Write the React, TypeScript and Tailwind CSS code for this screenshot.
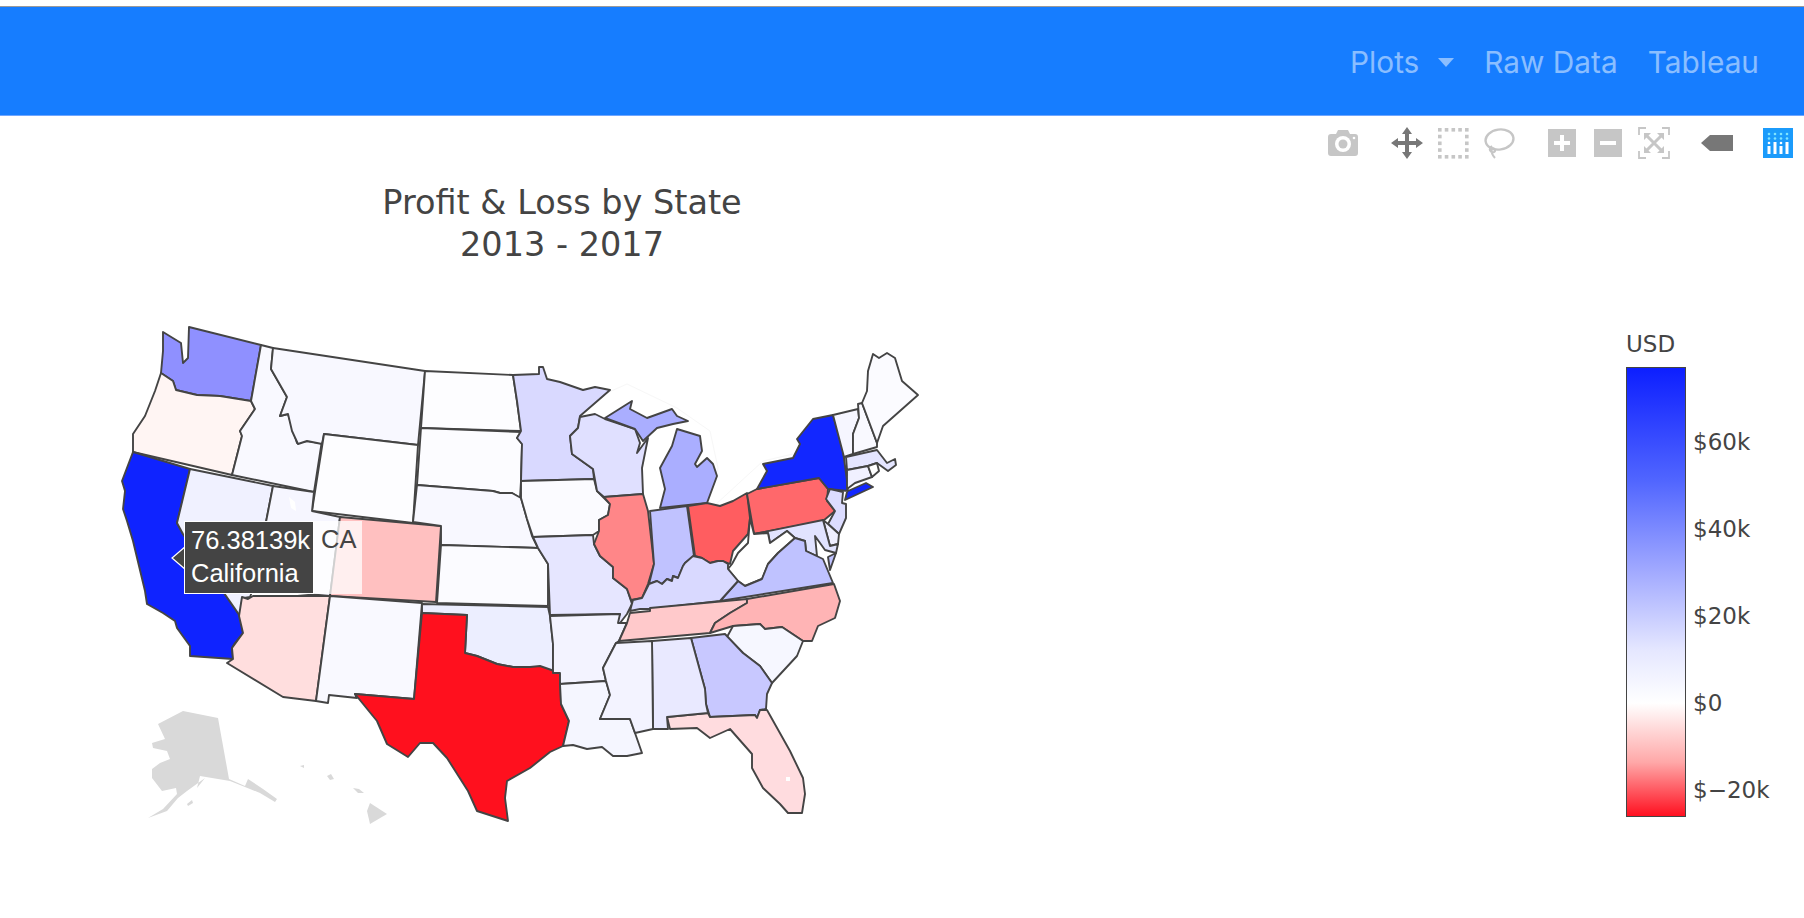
import React from "react";

type State = { id: string; fill: string; d: string };

const states: State[] = [
  { id: "WA", fill: "#8f90ff", d: "M163 331L181 342L183 362L188 357L189 326L261 344L251 400L220 395L197 394L176 389L173 380L161 372L163 350Z" },
  { id: "OR", fill: "#fff5f3", d: "M161 372L173 380L176 389L197 394L220 395L251 400L255 408L240 430L242 435L232 474L133 451L133 433L145 415L155 390Z" },
  { id: "CA", fill: "#0f23ff", d: "M133 451L190 468L177 522L183 533L240 615L243 632L235 642L232 647L233 658L190 655L190 645L177 627L175 620L163 612L147 603L145 590L133 540L127 520L123 508L125 490L122 480Z" },
  { id: "NV", fill: "#f0f1ff", d: "M190 468L273 485L253 588L250 596L244 597L242 600L240 615L183 533L177 522Z" },
  { id: "ID", fill: "#f9f9ff", d: "M261 344L273 347L271 368L287 396L280 415L288 413L297 442L307 440L320 442L323 433L314 491L232 474L242 435L240 430L255 408L251 400Z" },
  { id: "MT", fill: "#f8f8ff", d: "M273 347L425 370L418 444L324 433L322 443L307 440L298 443L292 430L288 413L280 415L287 396L271 368Z" },
  { id: "ND", fill: "#fdfdff", d: "M425 370L513 374L517 400L521 430L421 427Z" },
  { id: "SD", fill: "#fcfcff", d: "M421 427L521 431L517 437L522 443L521 480L520 497L512 492L500 492L493 490L417 484Z" },
  { id: "WY", fill: "#fdfdff", d: "M324 433L418 444L413 522L312 510Z" },
  { id: "UT", fill: "#f6f6ff", d: "M273 485L314 491L312 510L340 516L330 595L253 588Z" },
  { id: "CO", fill: "#ffc0c0", d: "M340 516L441 525L436 601L330 595Z" },
  { id: "AZ", fill: "#ffdede", d: "M242 596L248 598L253 595L330 595L316 700L283 696L227 662L233 658L232 647L243 632L239 615Z" },
  { id: "NM", fill: "#f9f9ff", d: "M330 595L422 602L414 698L355 693L357 697L329 694L328 702L316 700Z" },
  { id: "NE", fill: "#f8f8ff", d: "M417 484L493 490L500 492L512 492L521 497L527 518L532 535L538 547L441 544L441 525L413 521Z" },
  { id: "KS", fill: "#fbfbff", d: "M441 544L538 547L543 555L548 563L548 605L437 602Z" },
  { id: "OK", fill: "#eceeff", d: "M422 603L548 606L550 615L553 643L553 672L530 666L513 666L497 663L477 655L465 652L467 614L422 612Z" },
  { id: "TX", fill: "#ff101e", d: "M422 612L467 614L465 652L477 655L497 663L513 666L530 666L540 665L560 672L561 703L569 720L563 745L550 751L530 767L507 780L505 797L508 820L477 810L468 790L447 757L433 742L420 742L408 756L387 743L377 720L355 693L414 698Z" },
  { id: "MN", fill: "#d9d9ff", d: "M513 374L539 373L539 366L543 366L547 378L560 381L583 389L595 386L610 389L580 415L578 427L570 435L572 453L593 468L594 478L521 480L522 443L517 437L521 430L517 400Z" },
  { id: "IA", fill: "#fbfbff", d: "M521 480L594 478L597 490L610 503L608 514L599 519L599 530L593 534L533 536L527 518L521 497Z" },
  { id: "MO", fill: "#e6e6ff", d: "M533 536L593 534L594 543L600 555L613 566L613 577L627 588L632 603L627 613L620 622L615 622L620 613L550 614L548 563L543 555L538 547Z" },
  { id: "AR", fill: "#f3f3ff", d: "M550 615L620 613L618 622L627 622L619 640L616 642L603 667L606 680L560 683L560 672L553 672L553 643Z" },
  { id: "LA", fill: "#f5f6ff", d: "M560 683L606 680L610 694L600 718L630 718L635 732L642 752L627 755L613 755L602 746L587 748L573 744L563 745L569 720L561 703Z" },
  { id: "WI", fill: "#e0e0ff", d: "M580 416L595 413L605 418L635 428L640 442L637 452L648 437L642 467L643 493L604 496L597 490L593 468L572 453L570 435L578 427Z" },
  { id: "MIU", fill: "#aaaeff", d: "M605 417L632 400L630 408L647 417L672 408L677 415L688 420L673 423L657 427L643 440L635 428Z" },
  { id: "MIL", fill: "#aaaeff", d: "M677 428L700 435L702 450L695 463L697 466L707 457L713 463L717 475L707 502L660 507L665 488L660 467L672 445Z" },
  { id: "IL", fill: "#ff8688", d: "M604 496L643 493L648 510L654 563L648 583L642 597L631 599L627 588L613 577L613 566L600 555L594 543L599 530L599 519L608 514L610 503Z" },
  { id: "IN", fill: "#c0c2ff", d: "M650 510L687 505L694 555L685 562L683 565L678 577L673 575L672 580L667 578L662 583L657 580L649 583L654 563Z" },
  { id: "OH", fill: "#ff5d60", d: "M688 505L707 502L720 505L733 500L747 492L750 517L748 533L733 550L730 563L723 560L718 560L710 562L702 557L695 555Z" },
  { id: "PA", fill: "#ff686b", d: "M747 493L757 488L819 477L828 488L827 500L835 510L823 520L754 533Z" },
  { id: "NY", fill: "#1227ff", d: "M757 488L767 470L763 463L793 457L800 443L797 438L813 418L833 414L843 450L848 487L845 499L873 486L866 482L848 490L828 488L819 477Z" },
  { id: "VT", fill: "#f6f6ff", d: "M833 414L858 408L859 417L853 433L853 453L844 456Z" },
  { id: "NH", fill: "#f9f9ff", d: "M858 403L862 402L877 442L877 446L853 453L853 433L859 417Z" },
  { id: "ME", fill: "#fbfbff", d: "M862 402L867 390L868 370L873 353L879 357L887 352L895 357L902 380L918 394L883 425L877 442Z" },
  { id: "MA", fill: "#e4e5ff", d: "M846 456L877 449L887 462L895 458L896 464L888 470L877 462L868 465L847 469Z" },
  { id: "CT", fill: "#f0f0ff", d: "M847 469L868 465L872 476L855 482L847 488Z" },
  { id: "RI", fill: "#ffffff", d: "M868 465L877 462L879 470L872 476Z" },
  { id: "NJ", fill: "#dcdcff", d: "M830 488L843 491L842 502L846 503L846 517L839 533L828 523L835 510L826 498Z" },
  { id: "DE", fill: "#eeeeff", d: "M823 519L828 523L839 533L838 543L830 545Z" },
  { id: "MD", fill: "#e1e3ff", d: "M754 533L823 519L830 545L838 543L836 552L825 549L815 535L817 555L806 550L805 540L795 537L787 530L770 542L768 532Z" },
  { id: "WV", fill: "#ffffff", d: "M750 517L754 533L768 532L770 542L787 530L795 537L778 552L768 563L762 578L745 585L738 580L728 568L732 563L738 552L748 542Z" },
  { id: "VA", fill: "#bfc2ff", d: "M795 537L805 540L806 550L823 558L833 582L720 600L738 580L745 585L762 578L768 563L778 552Z" },
  { id: "VAE", fill: "#bfc2ff", d: "M836 552L830 569L828 556Z" },
  { id: "KY", fill: "#d9d9ff", d: "M649 583L657 580L662 583L667 578L672 580L673 575L678 577L683 565L685 562L693 555L702 557L710 562L718 560L723 560L728 563L728 568L738 580L720 600L650 608L640 608L630 610L633 599L642 597Z" },
  { id: "TN", fill: "#ffc9cb", d: "M630 612L650 610L650 607L747 598L747 602L730 612L715 622L710 632L619 640L627 622Z" },
  { id: "NC", fill: "#ffb4b5", d: "M747 598L834 583L840 600L835 617L818 625L812 640L803 640L782 626L765 628L760 623L733 625L710 632L715 622L730 612L747 602Z" },
  { id: "SC", fill: "#f6f7ff", d: "M727 636L733 625L760 623L765 628L782 626L803 640L797 655L772 682L760 665L743 652Z" },
  { id: "GA", fill: "#c8c8ff", d: "M691 637L725 633L743 652L760 665L772 682L767 693L766 708L760 709L757 717L755 714L710 716L706 703L705 688Z" },
  { id: "FL", fill: "#ffdcdf", d: "M667 716L708 712L710 716L755 714L757 717L760 709L767 709L790 750L803 777L805 793L802 812L788 812L780 803L763 787L752 767L752 753L730 728L710 737L697 727L670 728L668 720Z" },
  { id: "AL", fill: "#e9e9ff", d: "M652 640L691 637L705 688L706 703L708 712L667 716L668 728L653 728Z" },
  { id: "MS", fill: "#f3f3ff", d: "M616 642L652 640L653 728L635 732L630 718L600 718L610 694L606 680L603 667Z" },
];

const grey = [
  "M158 723L183 710L218 717L229 778L245 785L248 778L263 788L277 798L275 801L260 792L245 786L230 780L200 775L197 787L205 777L187 790L178 797L167 810L148 817L163 808L177 793L176 787L162 790L152 777L152 768L160 762L170 758L167 750L153 747L152 742L165 738Z",
  "M187 803L192 799L193 802L188 805Z",
  "M367 810L370 802L387 813L370 823Z",
  "M327 775L331 773L334 778L330 779Z",
  "M353 787L359 788L364 792L358 792Z",
  "M300 765L304 764L304 767Z",
];

function UsaMap() {
  return (
    <svg viewBox="0 320 1000 510" className="block w-[1000px] h-[510px]">
      <polyline
        points="580,415 600,395 627,383 677,407 710,430 718,467 707,502 714,505 763,460 793,453"
        fill="none"
        stroke="#f7f7f7"
        strokeWidth="1"
      />
      {grey.map((d) => (
        <path key={d} d={d} fill="#d9d9d9" />
      ))}
      {states.map((s) => (
        <path key={s.id} d={s.d} fill={s.fill} stroke="#444444" strokeWidth="1.9" strokeLinejoin="round" />
      ))}
      <path d="M289 496L295 501L296 510L291 507Z" fill="#ffffff" />
      <rect x="786" y="776" width="4" height="4" fill="#ffffff" />
    </svg>
  );
}

function Tooltip() {
  return (
    <>
      <svg viewBox="0 0 16 28" className="absolute left-[171px] top-[223px] w-[16px] h-[28px]">
        <path d="M15 2L1 14L15 26" fill="#444444" stroke="#ffffff" strokeWidth="1.2" />
      </svg>
      <div className="absolute left-[184px] top-[200px] w-[130px] h-[73px] bg-[#444444] border border-white pl-[6px] pt-[2px] text-white text-[25.5px] leading-[33px] whitespace-nowrap font-['Liberation_Sans',Arial,sans-serif]">
        <div>76.38139k</div>
        <div>California</div>
      </div>
      <div className="absolute left-[314px] top-[200px] w-[48px] h-[73px] bg-white/75 pl-[7px] pt-[2px] text-[#444444] text-[25.5px] leading-[33px] font-['Liberation_Sans',Arial,sans-serif]">
        CA
      </div>
    </>
  );
}

function Btn({ children }: { children: React.ReactNode }) {
  return <div className="w-[32px] h-[32px] shrink-0">{children}</div>;
}

const svgCls = "block w-[32px] h-[32px]";

function Toolbar() {
  const dots: [number, number][] = [];
  for (let i = 0; i < 5; i++) {
    const p = 1 + i * 6.75;
    dots.push([p, 1], [p, 28]);
    if (i > 0 && i < 4) dots.push([1, p], [28, p]);
  }
  return (
    <div className="flex items-center justify-end h-[50px] pt-[4px] pr-[10px]">
      <div className="flex gap-[14px] mr-[32px]">
        <Btn>
          <svg viewBox="0 0 32 32" className={svgCls}>
            <path d="M4 7H9L11 3H21L23 7H28Q31 7 31 10V26Q31 29 28 29H4Q1 29 1 26V10Q1 7 4 7Z" fill="#c6c6c6" />
            <circle cx="16" cy="17" r="8" fill="#ffffff" />
            <circle cx="16" cy="17" r="4.5" fill="#c6c6c6" />
            <circle cx="27" cy="11" r="1.3" fill="#ffffff" />
          </svg>
        </Btn>
      </div>
      <div className="flex gap-[14px] mr-[31px]">
        <Btn>
          <svg viewBox="0 0 32 32" className={svgCls}>
            <path d="M16 0L21 7H18V14H25V11L32 16L25 21V18H18V25H21L16 32L11 25H14V18H7V21L0 16L7 11V14H14V7H11Z" fill="#777777" />
          </svg>
        </Btn>
        <Btn>
          <svg viewBox="0 0 32 32" className={svgCls}>
            {dots.map(([x, y]) => (
              <rect key={`${x}-${y}`} x={x} y={y} width="3.6" height="3.6" fill="#c6c6c6" />
            ))}
          </svg>
        </Btn>
        <Btn>
          <svg viewBox="0 0 32 32" className={svgCls}>
            <ellipse cx="16.5" cy="12.5" rx="14" ry="10" fill="none" stroke="#c6c6c6" strokeWidth="2.4" transform="rotate(-8 16.5 12.5)" />
            <path d="M9 19C5 22 7 26 11 25C13 24 12 21 9 21C8 25 9 28 12 31" fill="none" stroke="#c6c6c6" strokeWidth="2" />
          </svg>
        </Btn>
      </div>
      <div className="flex gap-[14px] mr-[31px]">
        <Btn>
          <svg viewBox="0 0 32 32" className={svgCls}>
            <rect x="2" y="2" width="28" height="28" fill="#c6c6c6" />
            <path d="M14 8H18V14H24V18H18V24H14V18H8V14H14Z" fill="#ffffff" />
          </svg>
        </Btn>
        <Btn>
          <svg viewBox="0 0 32 32" className={svgCls}>
            <rect x="2" y="2" width="28" height="28" fill="#c6c6c6" />
            <rect x="8" y="14" width="16" height="4" fill="#ffffff" />
          </svg>
        </Btn>
        <Btn>
          <svg viewBox="0 0 32 32" className={svgCls}>
            <path d="M1 8V1H8M24 1H31V8M31 24V31H24M8 31H1V24" fill="none" stroke="#c6c6c6" strokeWidth="1.8" />
            <path d="M9 9L23 23M23 9L9 23" stroke="#c6c6c6" strokeWidth="3" />
            <path d="M6 6H13L6 13ZM26 6V13L19 6ZM26 26H19L26 19ZM6 26V19L13 26Z" fill="#c6c6c6" />
          </svg>
        </Btn>
      </div>
      <div className="flex mr-[29px]">
        <Btn>
          <svg viewBox="0 0 32 32" className={svgCls}>
            <path d="M0 16L9 8H32V24H9Z" fill="#777777" />
          </svg>
        </Btn>
      </div>
      <Btn>
        <svg viewBox="0 0 32 32" className={svgCls}>
          <rect x="1" y="1" width="30" height="30" fill="#1b9bfb" />
          {[7, 13, 19, 25].map((x) => (
            <g key={x}>
              <circle cx={x} cy="7" r="1.3" fill="#7fe3ff" />
              <circle cx={x} cy="11.5" r="1.3" fill="#7fe3ff" />
            </g>
          ))}
          <rect x="5.5" y="19" width="3" height="8" fill="#ffffff" />
          <circle cx="7" cy="16" r="1.3" fill="#ffffff" />
          <rect x="11.5" y="15" width="3" height="12" fill="#ffffff" />
          <rect x="17.5" y="19" width="3" height="8" fill="#ffffff" />
          <circle cx="19" cy="16" r="1.3" fill="#ffffff" />
          <rect x="23.5" y="15" width="3" height="12" fill="#ffffff" />
        </svg>
      </Btn>
    </div>
  );
}

function Colorbar() {
  const ticks = ["$60k", "$40k", "$20k", "$0", "$\u221220k"];
  return (
    <div className="w-[178px] ml-[502px] text-[#444444] text-[23px] font-['DejaVu_Sans',Verdana,sans-serif]">
      <div className="h-[38px] leading-[30px]">USD</div>
      <div className="flex">
        <div className="w-[60px] h-[450px] border border-[#444444] bg-[linear-gradient(to_bottom,#0d1fff_0%,#5065ff_25%,#a0a8ff_45%,#e5e7ff_63%,#ffffff_74.8%,#ffa8a8_88%,#ff1020_100%)]" />
        <div className="flex flex-col ml-[7px] pt-[61px] gap-[59px] leading-[28px] whitespace-nowrap">
          {ticks.map((t) => (
            <div key={t}>{t}</div>
          ))}
        </div>
      </div>
    </div>
  );
}

export default function App() {
  return (
    <div className="min-h-[918px] bg-white pt-[6px] overflow-hidden">
      <nav className="h-[110px] pt-[2px] bg-[#167dff] border-t border-t-[#9a9a9a] border-b border-b-[#6fa6ff] flex items-center justify-end pr-[45px] text-[29.8px] text-white/50 font-['Inter',sans-serif]">
        <span>Plots</span>
        <span className="ml-[19px] mr-[30px] w-0 h-0 border-x-[8.5px] border-x-transparent border-t-[9px] border-t-[#8bbeff]" />
        <span className="mr-[30px]">Raw Data</span>
        <span>Tableau</span>
      </nav>
      <Toolbar />
      <div className="flex">
        <div className="w-[1124px] shrink-0 relative">
          <h1 className="mt-[16px] text-center text-[33.5px] font-normal leading-[42px] text-[#444444] font-['DejaVu_Sans',Verdana,sans-serif]">
            Profit &amp; Loss by State
            <br />
            2013 - 2017
          </h1>
          <div className="relative mt-[55px] w-[1000px]">
            <UsaMap />
            <Tooltip />
          </div>
        </div>
        <div className="self-end mb-[14px]">
          <Colorbar />
        </div>
      </div>
    </div>
  );
}
